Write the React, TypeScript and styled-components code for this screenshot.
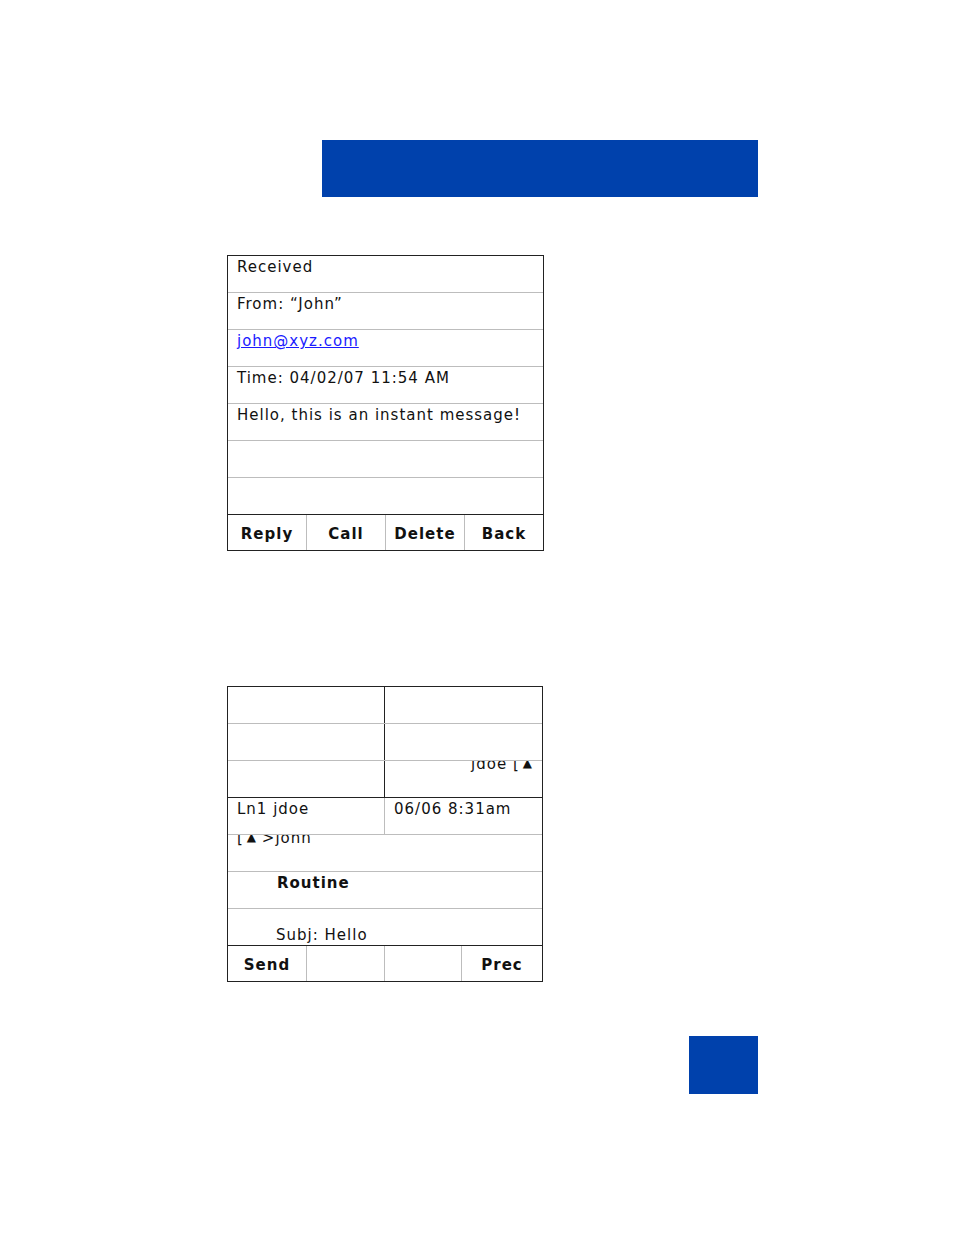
import styled, { createGlobalStyle } from "styled-components";

const Global = createGlobalStyle`
  *, *::before, *::after {
    box-sizing: border-box;
  }
  html, body {
    margin: 0;
    padding: 0;
    background: #fff;
  }
  body {
    font-family: "DejaVu Sans", Verdana, sans-serif;
    color: #111;
  }
`;

const Page = styled.div`
  width: 954px;
  height: 1235px;
  display: flex;
  flex-direction: column;
  overflow: hidden;
`;

const Banner = styled.div`
  margin: 140px 0 0 322px;
  width: 436px;
  height: 57px;
  background: #0041ac;
`;

const Screen = styled.div<{ $top: number; $w: number }>`
  margin: ${({ $top }) => $top}px 0 0 227px;
  width: ${({ $w }) => $w}px;
  border: 1px solid #222;
  display: flex;
  flex-direction: column;
  font-size: 15px;
  letter-spacing: 1px;
`;

const Row = styled.div<{ $dark?: boolean }>`
  display: flex;
  height: 37px;
  border-bottom: 1px solid ${({ $dark }) => ($dark ? "#222" : "#bdbdbd")};
  overflow: hidden;
`;

const Cell = styled.div<{ $w?: number; $split?: "dark" | "light"; $pad?: number; $bold?: boolean }>`
  position: relative;
  flex: ${({ $w }) => ($w ? `0 0 ${$w}px` : "1 1 auto")};
  padding: 2px 0 0 ${({ $pad }) => $pad ?? 9}px;
  border-right: ${({ $split }) =>
    $split ? `1px solid ${$split === "dark" ? "#222" : "#bdbdbd"}` : "none"};
  font-weight: ${({ $bold }) => ($bold ? "bold" : "normal")};
  white-space: nowrap;
  overflow: hidden;
`;

const Link = styled.a`
  color: #1a1aff;
  text-decoration: underline;
`;

const Keys = styled.div`
  display: flex;
  height: 35px;
`;

const Key = styled.div<{ $w: number; $last?: boolean }>`
  flex: 0 0 ${({ $w }) => $w}px;
  border-right: ${({ $last }) => ($last ? "none" : "1px solid #bdbdbd")};
  display: flex;
  align-items: center;
  justify-content: center;
  font-weight: bold;
  font-size: 15px;
  padding-top: 3px;
`;

const Clipped = styled.span<{ $shift: number; $right?: number }>`
  position: absolute;
  top: ${({ $shift }) => $shift}px;
  ${({ $right }) => ($right !== undefined ? `right: ${$right}px;` : "left: 9px;")}
`;

const Arrow = styled.span`
  font-size: 12px;
  margin-left: 3px;
  vertical-align: 2px;
  letter-spacing: 0;
`;

const Bottom = styled.div`
  padding-top: 15px;
`;

const Square = styled.div`
  margin: 54px 0 0 689px;
  width: 69px;
  height: 58px;
  background: #0041ac;
`;

export default function App() {
  return (
    <Page>
      <Global />
      <Banner />

      <Screen $top={58} $w={317}>
        <Row><Cell>Received</Cell></Row>
        <Row><Cell>From: “John”</Cell></Row>
        <Row><Cell><Link>john@xyz.com</Link></Cell></Row>
        <Row><Cell>Time: 04/02/07 11:54 AM</Cell></Row>
        <Row><Cell>Hello, this is an instant message!</Cell></Row>
        <Row><Cell /></Row>
        <Row $dark><Cell /></Row>
        <Keys>
          <Key $w={79}>Reply</Key>
          <Key $w={79}>Call</Key>
          <Key $w={79}>Delete</Key>
          <Key $w={78} $last>Back</Key>
        </Keys>
      </Screen>

      <Screen $top={135} $w={316}>
        <Row>
          <Cell $w={157} $split="dark" />
          <Cell />
        </Row>
        <Row>
          <Cell $w={157} $split="dark" />
          <Cell />
        </Row>
        <Row $dark>
          <Cell $w={157} $split="dark" />
          <Cell>
            <Clipped $shift={-6} $right={10}>jdoe [<Arrow>▲</Arrow></Clipped>
          </Cell>
        </Row>
        <Row>
          <Cell $w={157} $split="light">Ln1 jdoe</Cell>
          <Cell>06/06 8:31am</Cell>
        </Row>
        <Row>
          <Cell>
            <Clipped $shift={-6}>[<Arrow>▲</Arrow> &gt;john</Clipped>
          </Cell>
        </Row>
        <Row>
          <Cell $pad={49} $bold>Routine</Cell>
        </Row>
        <Row $dark>
          <Cell $pad={48}>
            <Bottom>Subj: Hello</Bottom>
          </Cell>
        </Row>
        <Keys>
          <Key $w={79}>Send</Key>
          <Key $w={78} />
          <Key $w={77} />
          <Key $w={80} $last>Prec</Key>
        </Keys>
      </Screen>

      <Square />
    </Page>
  );
}
